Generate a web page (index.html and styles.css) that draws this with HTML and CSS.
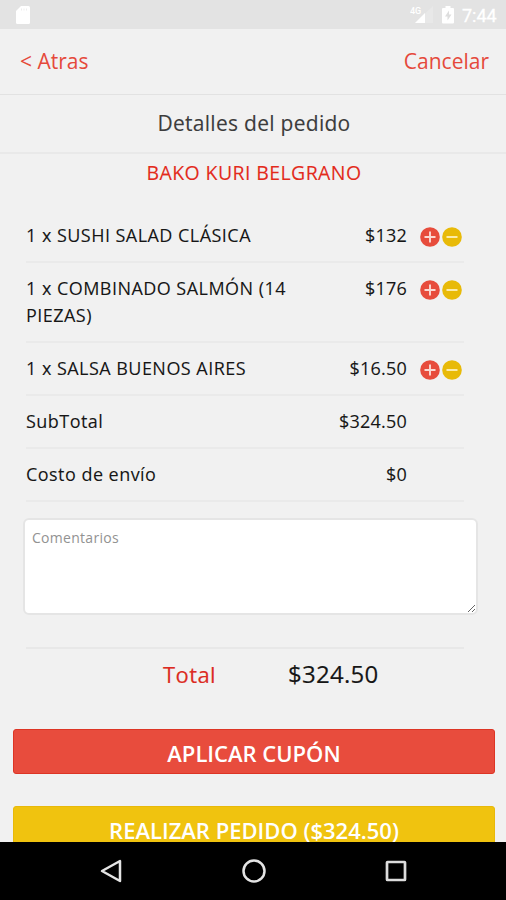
FILE: index.html
```html
<!DOCTYPE html>
<html lang="es">
<head>
<meta charset="utf-8">
<title>Detalles del pedido</title>
<link rel="stylesheet" href="styles.css">
</head>
<body>
<div class="screen">
  <header class="status">
    <svg class="sd" viewBox="0 0 16 20" width="16" height="20"><path d="M6 1h7.500a1.500 1.500 0 0 1 1.500 1.500v15a1.500 1.500 0 0 1-1.500 1.500h-11A1.500 1.500 0 0 1 1 17.500V6z" fill="#fff"/><path d="M6.500 3.500v2M9 3.500v2M11.500 3.500v2" stroke="#ededed" stroke-width="1"/></svg>
    <div class="status-right">
      <svg class="signal" viewBox="0 0 24 20" width="24" height="20"><text class="net" x="0" y="9">4G</text><path d="M5 18 23 1v17z" fill="#e8e8e8"/><path d="M5 18 15 8v10z" fill="#fff"/></svg>
      <svg class="battery" viewBox="0 0 12 18" width="12" height="18"><path d="M3.500 0h5v2H11a1 1 0 0 1 1 1v13.500a1 1 0 0 1-1 1H1a1 1 0 0 1-1-1V3a1 1 0 0 1 1-1h2.500z" fill="#fff"/><path d="M7 4.500 3 10.500h2.500v4l4-6H7z" fill="#dedede"/></svg>
      <span class="clock">7:44</span>
    </div>
  </header>
  <nav class="top"><a class="back">&lt; Atras</a><a class="cancel">Cancelar</a></nav>
  <h1 class="title"><span>Detalles del pedido</span></h1>
  <main class="content">
    <h2 class="shop"><span>BAKO KURI BELGRANO</span></h2>
    <ul class="order">
      <li class="row"><span class="name">1 x SUSHI SALAD CLÁSICA</span><span class="price">$132</span>
        <svg class="qty" viewBox="0 0 42 20" width="42" height="20"><circle cx="10" cy="10" r="9.800" fill="#e74c3c"/><path d="M4.500 10h11M10 4.500v11" stroke="#fbd9d3" stroke-width="1.900"/><circle cx="32" cy="10" r="9.800" fill="#e8ba08"/><path d="M26.500 10h11" stroke="#fbeeb5" stroke-width="1.900"/></svg></li>
      <li class="row tall"><span class="name">1 x COMBINADO SALMÓN (14 PIEZAS)</span><span class="price">$176</span>
        <svg class="qty" viewBox="0 0 42 20" width="42" height="20"><circle cx="10" cy="10" r="9.800" fill="#e74c3c"/><path d="M4.500 10h11M10 4.500v11" stroke="#fbd9d3" stroke-width="1.900"/><circle cx="32" cy="10" r="9.800" fill="#e8ba08"/><path d="M26.500 10h11" stroke="#fbeeb5" stroke-width="1.900"/></svg></li>
      <li class="row"><span class="name">1 x SALSA BUENOS AIRES</span><span class="price">$16.50</span>
        <svg class="qty" viewBox="0 0 42 20" width="42" height="20"><circle cx="10" cy="10" r="9.800" fill="#e74c3c"/><path d="M4.500 10h11M10 4.500v11" stroke="#fbd9d3" stroke-width="1.900"/><circle cx="32" cy="10" r="9.800" fill="#e8ba08"/><path d="M26.500 10h11" stroke="#fbeeb5" stroke-width="1.900"/></svg></li>
      <li class="row"><span class="name">SubTotal</span><span class="price">$324.50</span></li>
      <li class="row"><span class="name">Costo de envío</span><span class="price">$0</span></li>
    </ul>
    <textarea class="comments" placeholder="Comentarios"></textarea>
    <div class="total"><span class="total-label">Total</span><span class="total-value">$324.50</span></div>
    <button class="btn coupon"><span>APLICAR CUPÓN</span></button>
    <button class="btn submit"><span>REALIZAR PEDIDO ($324.50)</span></button>
  </main>
  <footer class="keys">
    <svg viewBox="0 0 24 26" width="24" height="26"><path d="M21 3v20L3 13z" fill="none" stroke="#e4e4e4" stroke-width="2.500" stroke-linejoin="round"/></svg>
    <svg viewBox="0 0 26 26" width="26" height="26"><circle cx="13" cy="13" r="10.500" fill="none" stroke="#e4e4e4" stroke-width="2.500"/></svg>
    <svg viewBox="0 0 24 24" width="24" height="24"><rect x="3" y="3" width="18" height="18" rx=".5" fill="none" stroke="#dcdcdc" stroke-width="2.700"/></svg>
  </footer>
</div>
</body>
</html>
```
FILE: styles.css
```css
* { box-sizing: border-box; }
body {
  margin: 0;
  background: #f1f1f1;
  color: #161616;
  font-family: "Open Sans", "Noto Sans", sans-serif;
}
.screen {
  display: flex;
  flex-direction: column;
  width: 506px;
  height: 900px;
  overflow: hidden;
}
.status {
  flex: none;
  display: flex;
  justify-content: space-between;
  height: 29px;
  padding: 5px 9px 0 15px;
  background: #e3e3e3;
}
.status-right { display: flex; }
.signal { margin-right: 8px; }
.net { font: 500 9px Roboto, sans-serif; fill: #fff; }
.battery { margin-top: 1px; }
.clock {
  width: 35px;
  margin-left: 8px;
  font: 400 18px/21px Roboto, sans-serif;
  color: #fff;
  -webkit-text-stroke: .3px;
}
.top {
  flex: none;
  display: flex;
  justify-content: space-between;
  height: 66px;
  padding: 0 17px 0 20px;
  border-bottom: 1px solid #e2e2e2;
  color: #e5493b;
  font-size: 21px;
  line-height: 65px;
}
.title {
  flex: none;
  height: 59px;
  margin: 0;
  padding-left: 2px;
  border-bottom: 2px solid #e9e9e9;
  color: #3c3c3c;
  font-size: 21px;
  font-weight: 400;
  letter-spacing: .28px;
  line-height: 57px;
  text-align: center;
  -webkit-text-stroke: .1px;
}
.content {
  flex: 1;
  min-height: 0;
  overflow: hidden;
}
.shop {
  height: 56px;
  margin: 0;
  padding-left: 2px;
  color: #e32b1c;
  font-size: 19.500px;
  font-weight: 400;
  letter-spacing: .4px;
  line-height: 37px;
  text-align: center;
  -webkit-text-stroke: .1px;
}
.order {
  width: 438px;
  margin: 0 0 0 26px;
  padding: 0;
  list-style: none;
}
.row {
  display: flex;
  height: 53px;
  padding-top: 12px;
  border-bottom: 2px solid #eaeaea;
  font-size: 18px;
  line-height: 26.500px;
  -webkit-text-stroke: .08px;
}
.tall { height: 80px; }
.name { width: 281px; letter-spacing: .46px; }
.price { width: 100px; letter-spacing: .2px; text-align: right; }
.qty { margin: 5px 0 0 13px; }
.comments {
  display: block;
  width: 455px;
  height: 97px;
  margin: 16px 0 0 23px;
  padding: 8px 7px;
  border: 2px solid #e5e5e5;
  border-radius: 6px;
  background: #fff;
  font: 14px/19px "Open Sans", sans-serif;
  letter-spacing: .28px;
}
.comments::placeholder { color: #929292; }
.total {
  display: flex;
  width: 438px;
  height: 82px;
  margin: 32px 0 0 26px;
  border-top: 2px solid #e8e8e8;
  line-height: 50px;
  -webkit-text-stroke: .15px;
}
.total-label {
  width: 125px;
  margin-left: 137px;
  color: #dc2b22;
  font-size: 22px;
  letter-spacing: .4px;
}
.total-value { font-size: 24px; letter-spacing: .25px; }
.btn {
  display: block;
  width: 482px;
  height: 45px;
  margin: 0 0 32px 13px;
  padding: 3px 0 0;
  border: 1px solid;
  border-radius: 3px;
  color: #fff;
  font: 600 22px/40px "Open Sans", sans-serif;
  text-align: center;
}
.coupon { background: #e84c3d; border-color: #dd3525; }
.submit { background: #f0c30f; border-color: #e8b90a; }
.keys {
  flex: none;
  display: flex;
  align-items: center;
  justify-content: space-between;
  height: 58px;
  padding: 0 98px 0 99px;
  background: #000;
}
```
